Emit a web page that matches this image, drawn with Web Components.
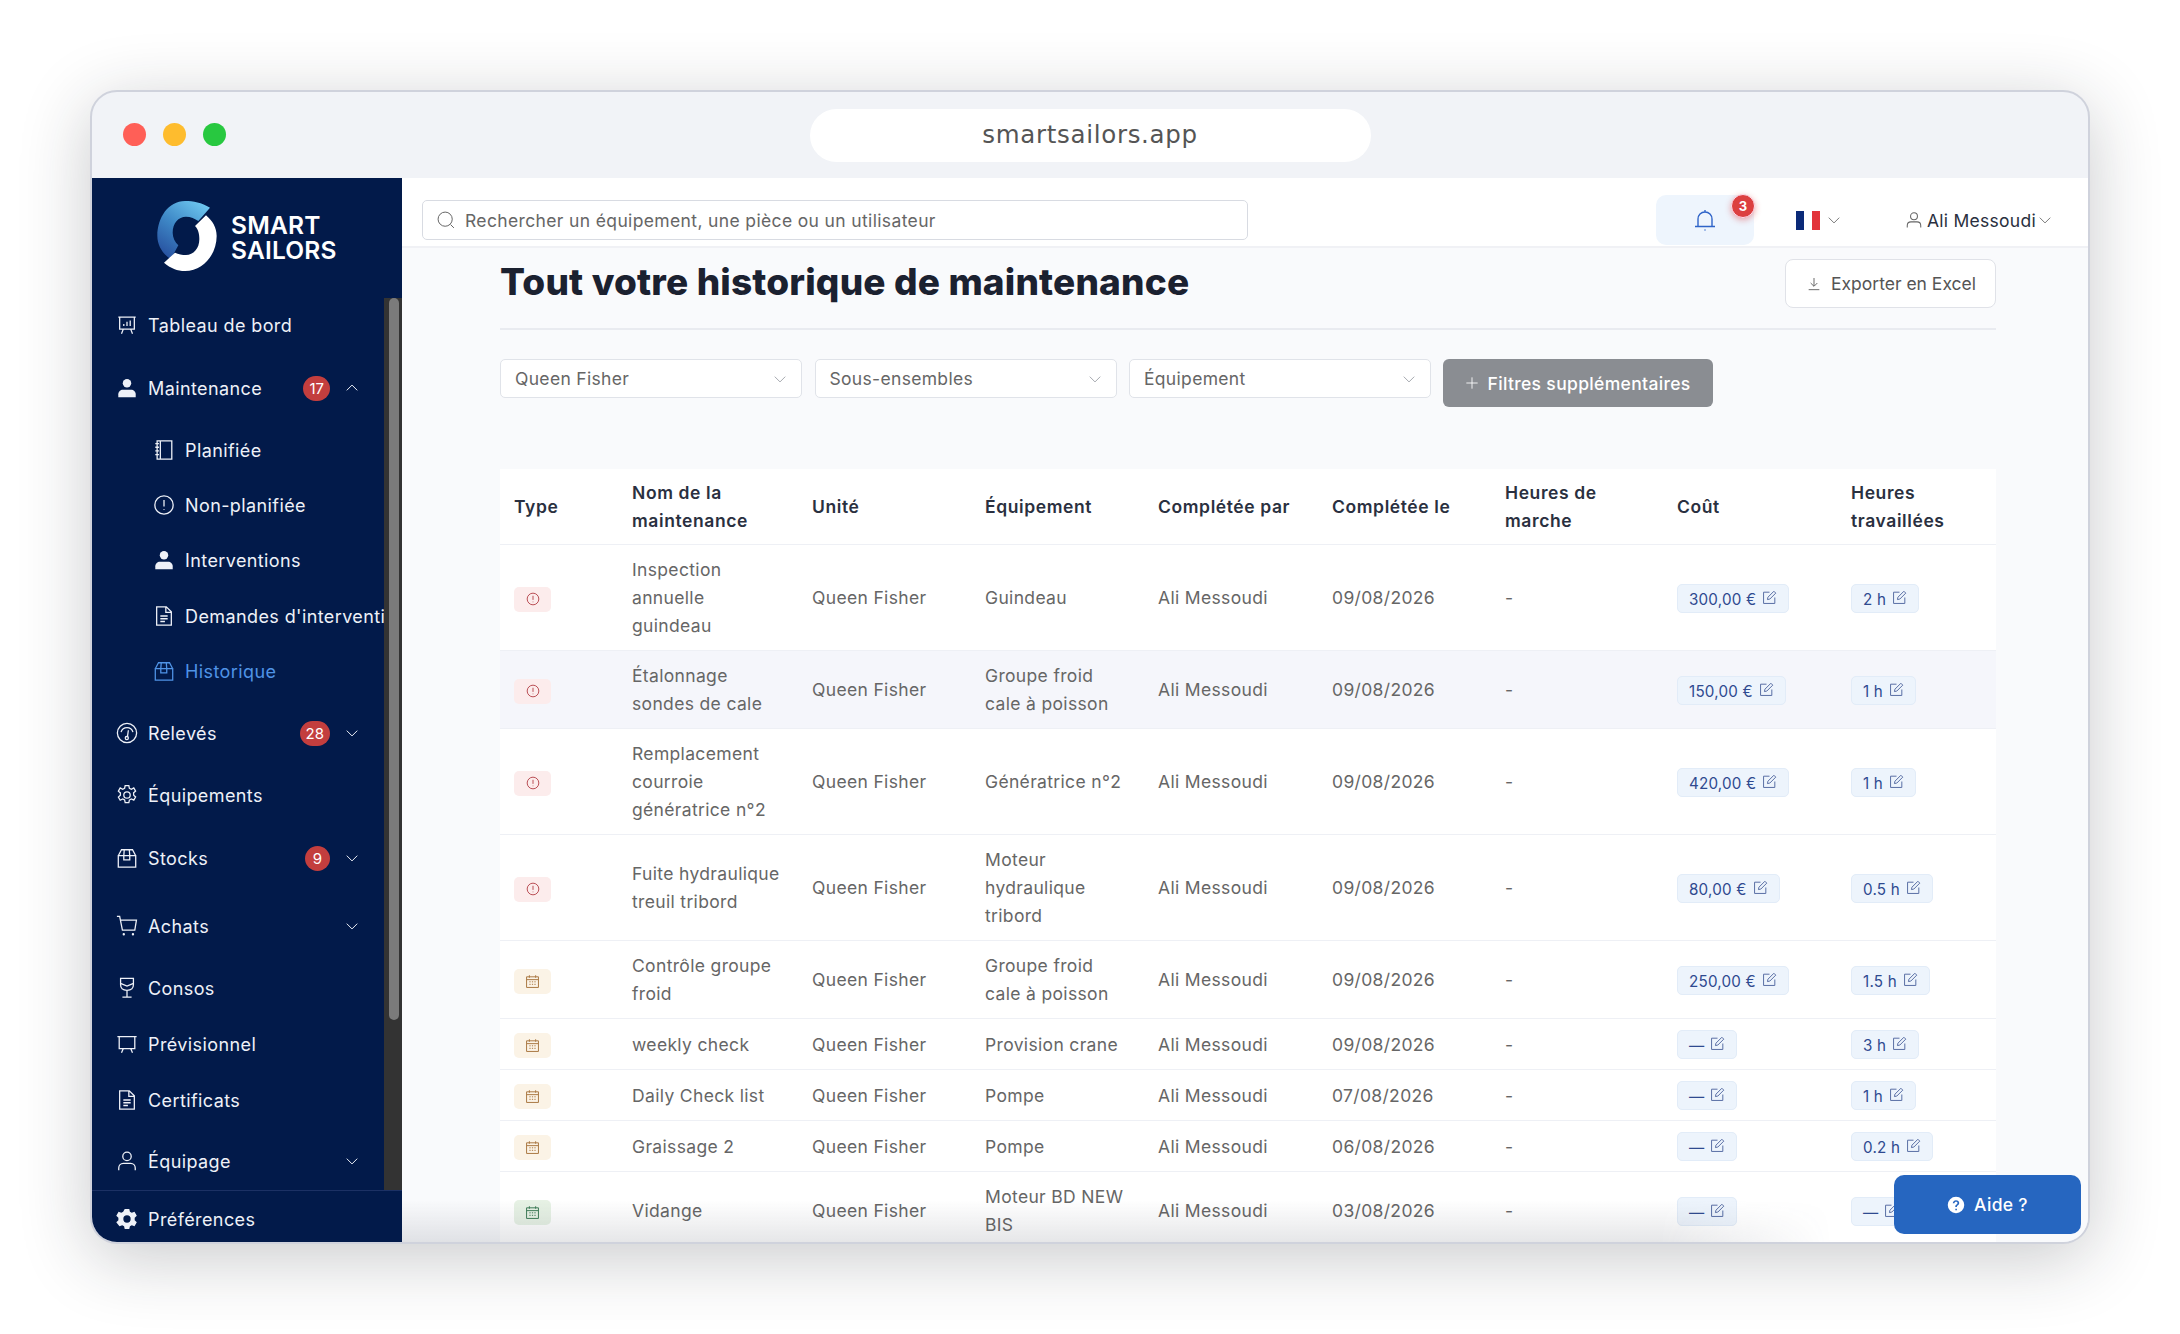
<!DOCTYPE html>
<html lang="fr">
<head>
<meta charset="utf-8">
<title>Smart Sailors</title>
<style>
  html, body { margin: 0; background: #fff; }
  body { padding-top: 90px; height: 1244px; overflow: hidden; font-family: Inter, "Liberation Sans", sans-serif; }
</style>
</head>
<body>
<browser-window url="smartsailors.app">
  <side-nav slot="nav">
    <nav-item icon="board" label="Tableau de bord"></nav-item>
    <nav-item icon="person" label="Maintenance" badge="17" chevron="up" style="margin-top:19px"></nav-item>
    <nav-item sub icon="notebook" label="Planifiée" style="margin-top:18px"></nav-item>
    <nav-item sub icon="alert" label="Non-planifiée" style="margin-top:11px"></nav-item>
    <nav-item sub icon="person" label="Interventions" style="margin-top:11px"></nav-item>
    <nav-item sub icon="doc" label="Demandes d'intervention" style="margin-top:12px"></nav-item>
    <nav-item sub active icon="box" label="Historique" style="margin-top:11px"></nav-item>
    <nav-item icon="gauge" label="Relevés" badge="28" chevron="down" style="margin-top:18px"></nav-item>
    <nav-item icon="gear" label="Équipements" style="margin-top:18px"></nav-item>
    <nav-item icon="box" label="Stocks" badge="9" chevron="down" style="margin-top:19px"></nav-item>
    <nav-item icon="cart" label="Achats" chevron="down" style="margin-top:24px"></nav-item>
    <nav-item icon="glass" label="Consos" style="margin-top:18px"></nav-item>
    <nav-item icon="easel" label="Prévisionnel" style="margin-top:12px"></nav-item>
    <nav-item icon="doc" label="Certificats" style="margin-top:12px"></nav-item>
    <nav-item icon="user" label="Équipage" chevron="down" style="margin-top:17px"></nav-item>
    <nav-item slot="footer" icon="gearfill" label="Préférences"></nav-item>
  </side-nav>
  <top-bar slot="top"></top-bar>
  <main-view slot="main">
    <filter-select value="Queen Fisher"></filter-select>
    <filter-select value="Sous-ensembles"></filter-select>
    <filter-select value="Équipement"></filter-select>
  </main-view>
</browser-window>

<script>
const ICONS = {
  board: '<path d="M2.500 3.500h19M4 3.500v13h16v-13M8 16.500l-2 5M16 16.500l2 5M8.500 13v-2M12 13V8.500M15.500 13V7"/>',
  easel: '<path d="M1.500 4h21M3.500 4v13h17V4M8 17l-2 4.500M16 17l2 4.500"/>',
  person: '<circle cx="12" cy="6.800" r="4.600" fill="currentColor" stroke="none"/><path d="M2.500 22v-3.200c0-3 2.400-5 5-5h9c2.600 0 5 2 5 5V22z" fill="currentColor" stroke="none"/>',
  user: '<circle cx="12" cy="7" r="4.600"/><path d="M3 22v-2.500c0-2.800 2.200-5 5-5h8c2.800 0 5 2.200 5 5V22"/>',
  notebook: '<path d="M4.500 2h16v20h-16zM8 2v20M2.500 5h4M2.500 9h4M2.500 13h4M2.500 17h4"/>',
  alert: '<circle cx="12" cy="12" r="10"/><path d="M12 6.500v7M12 16.500v1"/>',
  doc: '<path d="M4 2h10.500l5.500 5.500V22H4zM14 2v6h6M8 12h8M8 15h8M8 18h5"/>',
  box: '<path d="M2.500 9.500h19V22h-19zM2.500 9.500L6 3h12l3.500 6.500M9 3L8.500 9.500V14h6.500V9.500L14.500 3"/>',
  gauge: '<circle cx="12" cy="12" r="10.500"/><path d="M5.500 11a6.800 6.800 0 0 1 13 0M13.500 9l-1 7"/><circle cx="11.800" cy="17.500" r="1.700"/>',
  gear: '<circle cx="12" cy="12" r="3.500"/><path d="M10 1.800h4l.6 3 2.200 1 2.600-1.500 2 3.400-2.200 2 .1 2.500 2.100 1.900-2 3.500-2.700-1.300-2.100 1.200-.6 2.900h-4l-.6-3-2.100-1.100-2.700 1.400-2-3.500 2.200-2v-2.500l-2.200-1.900 2-3.500 2.700 1.400 2.100-1.100z"/>',
  gearfill: '<path fill="currentColor" fill-rule="evenodd" stroke="none" d="M9.500 1h5l.7 3.100 2 1.100 3-1 2.500 4.300-2.300 2.100v2.800l2.300 2.100-2.500 4.300-3-1-2 1.100-.7 3.100h-5l-.7-3.100-2-1.100-3 1L.3 15.500l2.300-2.100v-2.800L.3 8.500l2.500-4.300 3 1 2-1.100zM12 8a4 4 0 1 0 0 8 4 4 0 0 0 0-8z"/>',
  cart: '<path d="M1 1.500h3l3 15h13.500l1.800-11H5"/><circle cx="8.500" cy="21" r=".6"/><circle cx="18.500" cy="21" r=".6"/>',
  glass: '<path d="M5 1.500h14v7c0 4-3 6-7 6s-7-2-7-6zM5 7l7 3 7-3M12 14.500V22M7 22h10"/>',
  bell: '<path d="M5 18.500V11c0-4 3-7 7-7s7 3 7 7v7.500M2 18.500h20M12 2v2M11.500 22h1"/>',
  search: '<circle cx="11" cy="11" r="8.500"/><path d="M17.500 17.500l4 4"/>',
  download: '<path d="M12 3v12M7 10.500l5 5 5-5M4 20.500h16"/>',
  plus: '<path d="M12 3.500v17M3.500 12h17"/>',
  edit: '<path d="M12 3.500H2.500v18h18V12M19 2l3 3-9.500 9.500-3.800.8.800-3.800z"/>',
  cal: '<path d="M2.500 4.500h19v17h-19zM2.500 9h19M7 2v4M17 2v4M7 12.500h2M11 12.500h2M15 12.500h2M7 16.500h2M11 16.500h2M15 16.500h2"/>',
  help: '<path fill="currentColor" fill-rule="evenodd" stroke="none" d="M12 1a11 11 0 1 0 0 22 11 11 0 0 0 0-22zm-.9 16h2.100v2.100h-2.100zM12 5.500c2.500 0 4.300 1.500 4.300 3.700 0 1.700-1 2.600-2.100 3.300-.8.500-1 .9-1 1.700v.4h-2.200v-.6c0-1.400.6-2.100 1.700-2.800.9-.6 1.300-1 1.300-1.800 0-.9-.8-1.600-2-1.600s-2 .7-2.100 1.900H7.700C7.800 7.300 9.500 5.500 12 5.500z"/>',
  down: '<path d="M3 8l9 9 9-9"/>',
  up: '<path d="M3 16l9-9 9 9"/>'
};

class AppIcon extends HTMLElement {
  connectedCallback() {
    const size = this.getAttribute('size') || 24;
    const sw = this.getAttribute('sw') || 1.5;
    this.attachShadow({ mode: 'open' }).innerHTML = `
      <style>:host { display: inline-flex; flex: none; } svg { display: block; }</style>
      <svg width="${size}" height="${size}" viewBox="0 0 24 24" fill="none" stroke="currentColor" stroke-width="${sw}">${ICONS[this.getAttribute('name')]}</svg>`;
  }
}
customElements.define('app-icon', AppIcon);

class BrowserWindow extends HTMLElement {
  connectedCallback() {
    this.attachShadow({ mode: 'open' }).innerHTML = `
      <style>
        :host {
          display: flex; flex-direction: column; box-sizing: border-box;
          width: 2000px; height: 1154px; margin: 0 auto;
          border: 2px solid #cfd2dc; border-radius: 27px; overflow: hidden;
          background: #f1f3f7;
          box-shadow: 0 14px 70px rgba(30, 32, 40, .24);
        }
        .bar { flex: none; height: 86px; display: grid; grid-template-columns: 1fr 561px 1fr; align-items: center; }
        .dots { display: flex; gap: 17px; padding: 0 0 1px 31px; }
        .dots i { width: 23px; height: 23px; border-radius: 50%; }
        .url {
          height: 53px; border-radius: 27px; background: #fff; text-align: center;
          font: 24.500px/51px "DejaVu Sans", sans-serif; color: #555; letter-spacing: .7px;
        }
        .body { flex: 1; min-height: 0; display: flex; }
        .right { flex: 1; min-width: 0; display: flex; flex-direction: column; }
      </style>
      <div class="bar">
        <div class="dots"><i style="background:#ff5f57"></i><i style="background:#febc2e"></i><i style="background:#28c840"></i></div>
        <div class="url">${this.getAttribute('url')}</div>
      </div>
      <div class="body">
        <slot name="nav"></slot>
        <div class="right"><slot name="top"></slot><slot name="main"></slot></div>
      </div>`;
  }
}
customElements.define('browser-window', BrowserWindow);

class SideNav extends HTMLElement {
  connectedCallback() {
    this.attachShadow({ mode: 'open' }).innerHTML = `
      <style>
        :host { display: flex; flex-direction: column; flex: none; width: 310px; height: 100%; background: #021a4a; color: #eef1f8; }
        .logo { flex: none; height: 120px; box-sizing: border-box; padding: 23px 0 0 65px; display: flex; gap: 14px; }
        .logo span { font: 600 24.500px/25px Inter, sans-serif; color: #fff; padding-top: 12px; letter-spacing: .2px; }
        .scroll { flex: 1; min-height: 0; display: flex; }
        .items { flex: 1; min-width: 0; overflow: hidden; padding-top: 5px; display: flex; flex-direction: column; }
        .track { flex: none; width: 18px; background: #333; }
        .thumb { width: 10px; height: 722px; margin-left: 5px; border-radius: 5px; background: #7b7b7b; }
        .foot { flex: none; height: 52px; box-sizing: border-box; border-top: 1px solid #1c3164; padding-top: 6px; }
      </style>
      <div class="logo">
        <svg width="60" height="70" viewBox="172 335 178 210">
          <defs><linearGradient id="lg" x1=".85" y1="0" x2=".2" y2="1"><stop offset="0" stop-color="#6fc8f0"/><stop offset=".5" stop-color="#3f8ac8"/><stop offset="1" stop-color="#27509f"/></linearGradient></defs>
          <path fill="url(#lg)" d="M330 355C305 340 280 335 255 335C205 335 172 385 172 440C172 470 190 495 212 510L235 468C225 458 218 445 218 430C218 402 235 382 258 382C272 382 285 388 295 395Z"/>
          <path fill="#fff" d="M318 378L285 410C295 420 298 435 298 450C298 478 280 497 258 497C247 497 235 494 225 490L192 520C212 537 232 545 255 545C310 545 350 495 350 440C350 415 338 395 318 378Z"/>
        </svg>
        <span>SMART<br>SAILORS</span>
      </div>
      <div class="scroll">
        <div class="items"><slot></slot></div>
        <div class="track"><div class="thumb"></div></div>
      </div>
      <div class="foot"><slot name="footer"></slot></div>`;
  }
}
customElements.define('side-nav', SideNav);

class NavItem extends HTMLElement {
  connectedCallback() {
    const badge = this.getAttribute('badge');
    const chevron = this.getAttribute('chevron');
    this.attachShadow({ mode: 'open' }).innerHTML = `
      <style>
        :host {
          display: flex; align-items: center; flex: none; height: 44px; box-sizing: border-box;
          padding-left: 24px; gap: 10px; font-size: 18px; letter-spacing: .4px; color: #eef1f8; white-space: nowrap;
        }
        :host([sub]) { padding-left: 61px; }
        :host([active]) { color: #4f93e6; }
        .label { flex: 1; }
        .badge {
          flex: none; height: 25px; min-width: 25px; padding: 0 ${badge && badge.length > 1 ? 6 : 0}px; box-sizing: border-box;
          border-radius: 13px; background: #c33e3e; color: #fff; font-size: 15px; line-height: 25px; text-align: center; letter-spacing: 0;
          margin-right: 5px;
        }
        .chev { flex: none; width: 14px; margin-right: 25px; display: flex; }
      </style>
      <app-icon name="${this.getAttribute('icon')}" size="22" sw="1.400"></app-icon>
      <span class="label">${this.getAttribute('label')}</span>
      ${badge ? `<span class="badge">${badge}</span>` : ''}
      ${chevron ? `<span class="chev"><app-icon name="${chevron}" size="14" sw="1.700"></app-icon></span>` : ''}`;
  }
}
customElements.define('nav-item', NavItem);

class TopBar extends HTMLElement {
  connectedCallback() {
    this.attachShadow({ mode: 'open' }).innerHTML = `
      <style>
        :host {
          display: flex; flex: none; align-items: center; height: 70px; box-sizing: border-box;
          padding: 16px 14px 0 20px; background: #fff; border-bottom: 2px solid #f0f1f5; font-size: 18px;
        }
        .search {
          width: 826px; height: 40px; box-sizing: border-box; border: 1px solid #d8dbe2; border-radius: 5px;
          display: flex; align-items: center; gap: 9px; padding-left: 13px; color: #666; letter-spacing: .36px; font-size: 17.500px;
        }
        .bell {
          position: relative; margin-left: auto; width: 98px; height: 50px; border-radius: 10px; background: #eef5fd;
          display: flex; align-items: center; justify-content: center; color: #2f64c8;
        }
        .count {
          position: absolute; left: 75px; top: -1px; width: 24px; height: 24px; border-radius: 50%;
          background: #dc4040; color: #fff; font-size: 13px; font-weight: 700; text-align: center;
          box-shadow: 0 2px 6px rgba(220, 64, 64, .45); border: 1px solid #fde; box-sizing: border-box; line-height: 22px;
        }
        .lang { width: 96px; height: 50px; margin-left: 16px; display: flex; align-items: center; justify-content: center; gap: 6px; color: #666; }
        .flag { width: 25px; height: 19px; display: flex; }
        .flag i { flex: 1; }
        .user { width: 191px; height: 50px; margin-left: 17px; display: flex; align-items: center; justify-content: flex-end; color: #2a3040; letter-spacing: .28px; font-size: 17.500px; box-sizing: border-box; padding-right: 22px; }
        .user .ic { color: #666; margin-right: 4px; display: flex; }
        .chev { color: #666; display: flex; margin-left: 2px; }
      </style>
      <div class="search"><app-icon name="search" size="20" sw="1.200"></app-icon>Rechercher un équipement, une pièce ou un utilisateur</div>
      <div class="bell"><app-icon name="bell" size="24" sw="1.400"></app-icon><span class="count">3</span></div>
      <div class="lang"><span class="flag"><i style="background:#0b2a78"></i><i style="background:#fff"></i><i style="background:#e2343b"></i></span><app-icon name="down" size="14" sw="1.500"></app-icon></div>
      <div class="user"><span class="ic"><app-icon name="user" size="18" sw="1.400"></app-icon></span>Ali Messoudi<span class="chev"><app-icon name="down" size="14" sw="1.500"></app-icon></span></div>`;
  }
}
customElements.define('top-bar', TopBar);

class FilterSelect extends HTMLElement {
  connectedCallback() {
    this.attachShadow({ mode: 'open' }).innerHTML = `
      <style>
        :host {
          display: flex; align-items: center; justify-content: space-between; flex: none; width: 302px; height: 39px; box-sizing: border-box;
          background: #fff; border: 1px solid #e0e3e9; border-radius: 5px; padding: 0 14px 0 14px;
          font-size: 17.500px; letter-spacing: .32px; color: #666;
        }
        app-icon { color: #8a8d95; }
      </style>
      ${this.getAttribute('value')}<app-icon name="down" size="14" sw="1.300"></app-icon>`;
  }
}
customElements.define('filter-select', FilterSelect);

class TypeBadge extends HTMLElement {
  connectedCallback() {
    const kinds = { r: ['#fcecec', '#b5444a', 'alert', 14], o: ['#fbf3e6', '#ab7a45', 'cal', 15], g: ['#e7f2e5', '#3f7d58', 'cal', 15] };
    const [bg, fg, icon, size] = kinds[this.getAttribute('kind')];
    this.attachShadow({ mode: 'open' }).innerHTML = `
      <style>
        :host { display: inline-flex; align-items: center; justify-content: center; width: 37px; height: 25px; border-radius: 5px; background: ${bg}; color: ${fg}; vertical-align: middle; }
      </style>
      <app-icon name="${icon}" size="${size}" sw="1.600"></app-icon>`;
  }
}
customElements.define('type-badge', TypeBadge);

class ValueChip extends HTMLElement {
  connectedCallback() {
    this.attachShadow({ mode: 'open' }).innerHTML = `
      <style>
        :host {
          display: inline-flex; align-items: center; height: 29px; box-sizing: border-box; padding: 0 11px;
          gap: 6px; background: #edf4fc; border: 1px solid #e2ecf8; border-radius: 5px; color: #2f4a90;
          font-size: 15.200px; letter-spacing: .2px; vertical-align: top; white-space: nowrap;
        }
        span { padding-top: 3px; }
        app-icon { margin-top: -2px; color: #5a6fa5; }
      </style>
      <span>${this.getAttribute('value')}</span><app-icon name="edit" size="15" sw="1.600"></app-icon>`;
  }
}
customElements.define('value-chip', ValueChip);

const ROWS = [
  ['r', 'Inspection<br>annuelle<br>guindeau', 'Guindeau', '09/08/2026', '300,00 €', '2 h'],
  ['r', 'Étalonnage<br>sondes de cale', 'Groupe froid<br>cale à poisson', '09/08/2026', '150,00 €', '1 h'],
  ['r', 'Remplacement<br>courroie<br>génératrice n°2', 'Génératrice n°2', '09/08/2026', '420,00 €', '1 h'],
  ['r', 'Fuite hydraulique<br>treuil tribord', 'Moteur<br>hydraulique<br>tribord', '09/08/2026', '80,00 €', '0.5 h'],
  ['o', 'Contrôle groupe<br>froid', 'Groupe froid<br>cale à poisson', '09/08/2026', '250,00 €', '1.5 h'],
  ['o', 'weekly check', 'Provision crane', '09/08/2026', '—', '3 h'],
  ['o', 'Daily Check list', 'Pompe', '07/08/2026', '—', '1 h'],
  ['o', 'Graissage 2', 'Pompe', '06/08/2026', '—', '0.2 h'],
  ['g', 'Vidange', 'Moteur BD NEW<br>BIS', '03/08/2026', '—', '—']
];

class MaintenanceTable extends HTMLElement {
  connectedCallback() {
    const widths = [118, 180, 173, 173, 174, 173, 172, 174, 159];
    const heads = ['Type', 'Nom de la<br>maintenance', 'Unité', 'Équipement', 'Complétée par', 'Complétée le', 'Heures de<br>marche', 'Coût', 'Heures<br>travaillées'];
    const rows = ROWS.map(([kind, name, equip, date, cost, hours], i) => `
      <tr class="${i === 1 ? 'alt' : ''}">
        <td><type-badge kind="${kind}"></type-badge></td>
        <td>${name}</td><td>Queen Fisher</td><td>${equip}</td><td>Ali Messoudi</td><td>${date}</td><td>-</td>
        <td><value-chip value="${cost}"></value-chip></td>
        <td><value-chip value="${hours}"></value-chip></td>
      </tr>`).join('');
    this.attachShadow({ mode: 'open' }).innerHTML = `
      <style>
        :host { display: block; width: 1496px; background: #fff; }
        table { width: 1496px; table-layout: fixed; border-collapse: collapse; font-size: 17.500px; line-height: 28px; letter-spacing: .34px; color: #666; white-space: nowrap; }
        th { text-align: left; font-weight: 600; color: #2a3040; padding: 10px 0 9px 14px; border-bottom: 1px solid #eef0f5; letter-spacing: .6px; }
        td { padding: 11px 0 10px 14px; border-bottom: 1px solid #eef0f5; }
        tr.alt td { background: #f5f6fb; }
      </style>
      <table>
        <colgroup>${widths.map(w => `<col style="width:${w}px">`).join('')}</colgroup>
        <thead><tr>${heads.map(h => `<th>${h}</th>`).join('')}</tr></thead>
        <tbody>${rows}</tbody>
      </table>`;
  }
}
customElements.define('maintenance-table', MaintenanceTable);

class MainView extends HTMLElement {
  connectedCallback() {
    this.attachShadow({ mode: 'open' }).innerHTML = `
      <style>
        :host { display: block; position: relative; flex: 1; min-height: 0; height: 994px; overflow: hidden; background: #f9fafc; box-sizing: border-box; padding: 11px 92px 0 98px; }
        .head { display: flex; justify-content: space-between; height: 69px; border-bottom: 2px solid #e9ebf0; }
        h1 { margin: 0; font-size: 37px; line-height: 45px; font-weight: 800; letter-spacing: .17px; color: #1b2130; }
        .export {
          display: flex; align-items: center; gap: 9px; height: 49px; width: 211px; box-sizing: border-box; padding-left: 20px;
          background: #fff; border: 1px solid #e0e2e8; border-radius: 8px; color: #555; font-size: 17.500px; white-space: nowrap;
        }
        .filters { display: flex; gap: 12.500px; margin: 29px 0 62px; height: 48px; align-items: flex-start; }
        .more {
          display: flex; align-items: center; gap: 8px; height: 48px; width: 270px; box-sizing: border-box; padding-left: 21px; margin-left: -1px;
          background: #8a8d92; color: #fff; border-radius: 6px; font-size: 17.500px; font-weight: 500; letter-spacing: .34px; white-space: nowrap;
        }
        .fade {
          position: absolute; left: 0; bottom: 0; width: 1430px; height: 42px; pointer-events: none;
          background: linear-gradient(transparent, rgba(60, 65, 80, .13));
          -webkit-mask-image: linear-gradient(90deg, #000 88%, transparent);
        }
        .help {
          position: absolute; right: 7px; bottom: 8px; width: 187px; height: 59px; display: flex; align-items: center; justify-content: center; gap: 9px;
          background: #2666c0; color: #fff; border-radius: 10px; font-size: 17.500px; letter-spacing: .32px; font-weight: 500;
        }
      </style>
      <div class="head">
        <h1>Tout votre historique de maintenance</h1>
        <div class="export"><app-icon name="download" size="16" sw="1.300"></app-icon>Exporter en Excel</div>
      </div>
      <div class="filters">
        <slot></slot>
        <div class="more"><app-icon name="plus" size="16" sw="1.300"></app-icon>Filtres supplémentaires</div>
      </div>
      <maintenance-table></maintenance-table>
      <div class="fade"></div>
      <div class="help"><app-icon name="help" size="18"></app-icon>Aide ?</div>`;
  }
}
customElements.define('main-view', MainView);
</script>
</body>
</html>
